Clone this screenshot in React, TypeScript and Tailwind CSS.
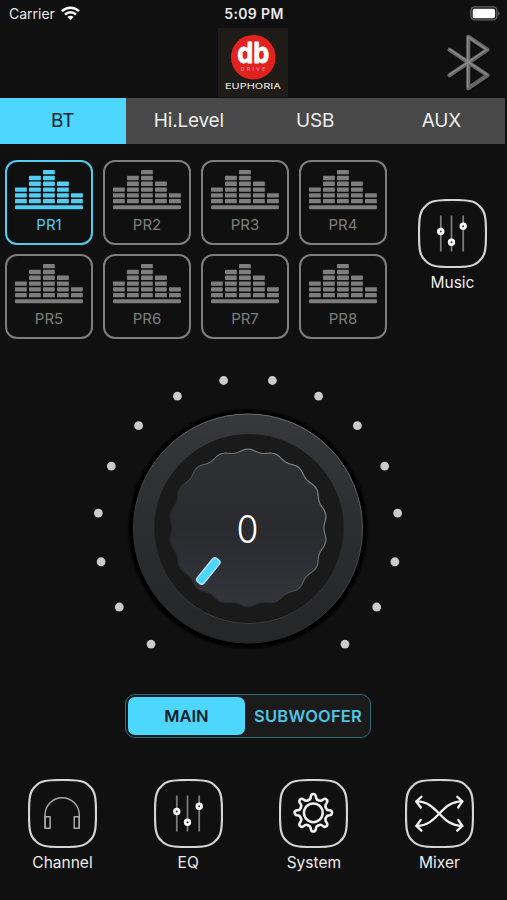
import { useState } from "react";
import type { ReactNode } from "react";
import clsx from "clsx";

const SOURCES = ["BT", "Hi.Level", "USB", "AUX"];
const PRESETS = ["PR1", "PR2", "PR3", "PR4", "PR5", "PR6", "PR7", "PR8"];
const BARS = [3, 5, 6, 4, 2];

const DOTS = Array.from({ length: 16 }, (_, i) => {
  const a = ((i - 7.5) * 18.65 * Math.PI) / 180;
  return { x: 150.5 * Math.sin(a), y: -150.5 * Math.cos(a) };
});

// wavy edge of the knob cap
const CAP_PATH =
  Array.from({ length: 360 }, (_, deg) => {
    const a = (deg * Math.PI) / 180;
    const r = 77.4 + 1.5 * Math.cos(18 * a);
    const x = (r * Math.sin(a)).toFixed(2);
    const y = (-r * Math.cos(a) - 1).toFixed(2);
    return `${deg === 0 ? "M" : "L"}${x} ${y}`;
  }).join("") + "Z";

function StatusBar() {
  return (
    <div className="grid h-7 grid-cols-3 items-center pb-px pl-[9px] pr-[6px] text-[#e8e8e8]">
      <div className="flex items-center gap-1.5">
        <span className="text-[14px]">Carrier</span>
        <svg width="19" height="15" viewBox="0 0 19 15" fill="none" stroke="white" strokeWidth="2.5">
          <path d="M1 5.2a12.2 12.2 0 0 1 17 0" />
          <path d="M4 8.5a7.9 7.9 0 0 1 11 0" />
          <path d="M6.4 11a4.4 4.4 0 0 1 6.2 0L9.5 14.3z" fill="white" stroke="none" />
        </svg>
      </div>
      <span className="-ml-[2px] text-center text-[14px] font-semibold tracking-[0.35px]">5:09 PM</span>
      <svg className="justify-self-end" width="31" height="15" viewBox="0 0 31 15">
        <rect x="0.9" y="0.9" width="26" height="13" rx="4" fill="none" stroke="#666" strokeWidth="1.3" />
        <rect x="2.7" y="2.7" width="22.4" height="9.6" rx="2" fill="white" />
        <path d="M28.3 5.2q2.4 2.3 0 4.6z" fill="#777" />
      </svg>
    </div>
  );
}

function Logo() {
  return (
    <svg className="bg-[#1f1c18]" width="70" height="69" viewBox="0 0 70 69">
      <circle cx="35.3" cy="29.2" r="22.3" fill="#e3211f" />
      <text
        x="19.3"
        y="34.6"
        fontSize="29"
        fontWeight="700"
        fill="white"
        stroke="white"
        strokeWidth="0.9"
        strokeLinejoin="round"
        textLength="32"
        lengthAdjust="spacingAndGlyphs"
      >
        db
      </text>
      <text x="22.8" y="42.6" fontSize="5" fill="#f3b0a8" textLength="24.5" lengthAdjust="spacing">
        DRIVE
      </text>
      <text x="7" y="60.5" fontSize="7.2" fontWeight="500" fill="#ddd" textLength="56" lengthAdjust="spacingAndGlyphs">
        EUPHORIA
      </text>
    </svg>
  );
}

function BluetoothIcon() {
  return (
    <svg width="46" height="60" viewBox="0 0 46 60" fill="none" strokeLinecap="round" strokeLinejoin="round">
      <path d="M3.5 18.500 41 44.500 22.500 57.500V5.500l18.500 13L3.500 44.500" stroke="#000" strokeWidth="5" opacity="0.5" />
      <path d="M2.500 17.800 40.500 43.300 21.300 56.300V4.800l19.200 13L2.500 43.300" stroke="#666" strokeWidth="4.200" />
      <path d="M2.500 17.200 40 42.700M20.700 55V4.800l19 12.700L2.500 42.700" stroke="#8a8a8a" strokeWidth="1.4" />
    </svg>
  );
}

function BarsIcon() {
  return (
    <svg width="68" height="40" viewBox="0 0 204 120" fill="currentColor">
      {BARS.map((count, col) =>
        Array.from({ length: count }, (_, row) => (
          <rect key={`${col}-${row}`} x={col * 42} y={87 - row * 17.4} width="35.5" height="13" rx="2" />
        )),
      )}
      <rect y="106" width="204" height="12" rx="4" />
    </svg>
  );
}

function Preset({ label, active, onClick }: { label: string; active: boolean; onClick: () => void }) {
  return (
    <button
      onClick={onClick}
      className={clsx(
        "flex h-[85px] w-[88px] flex-col items-center rounded-[12px] border-2 pt-[8px]",
        active ? "border-[#4fcdf3] text-[#4fcdf3]" : "border-[#7e7e7e] text-[#7e7e7e]",
      )}
    >
      <BarsIcon />
      <span className="mt-[5px] text-[15px] leading-5">{label}</span>
    </button>
  );
}

function IconButton({ label, children }: { label: string; children: ReactNode }) {
  return (
    <button className="flex w-[69px] flex-col items-center text-[#ececec]">
      <svg width="69" height="69" viewBox="0 0 206 206" fill="none" stroke="#f0f0f0" strokeLinecap="round" strokeLinejoin="round">
        <path
          d="M103 3C148 3 170 5 184 22C201 36 203 58 203 103S201 170 184 184C170 201 148 203 103 203S36 201 22 184C5 170 3 148 3 103S5 36 22 22C36 5 58 3 103 3Z"
          stroke="#d4d4d4"
          strokeWidth="6.5"
        />
        {children}
      </svg>
      <span className="mt-[4.5px] text-[15.5px] leading-5">{label}</span>
    </button>
  );
}

function SlidersGlyph() {
  return (
    <>
      <path d="M68 49V157M100 49V157M135 49V157" stroke="#808080" strokeWidth="5" strokeLinecap="butt" />
      <g fill="#333" stroke="white" strokeWidth="8">
        <circle cx="68" cy="97" r="7" />
        <circle cx="100" cy="129" r="7" />
        <circle cx="135" cy="81" r="7" />
      </g>
    </>
  );
}

function HeadphonesGlyph() {
  return (
    <g stroke="#a8a8a8" strokeWidth="4.5">
      <path d="M51 146V107a51 51 0 0 1 102 0V146" />
      <rect x="51" y="113" width="15" height="34" />
      <rect x="138" y="113" width="15" height="34" />
    </g>
  );
}

function GearGlyph() {
  return (
    <g transform="translate(102.5 101)" strokeWidth="7.5">
      {[0, 45, 90, 135, 180, 225, 270, 315].map((deg) => (
        <path key={deg} transform={`rotate(${deg})`} d="M-15.500-37.500Q-8-39-7.500-49Q-6-56 0-56Q6-56 7.500-49Q8-39 15.500-37.500" />
      ))}
      <circle r="28" />
    </g>
  );
}

function ShuffleGlyph() {
  return (
    <g strokeWidth="7">
      <path d="M35 67C100 67 104 140 171 140M35 140C100 140 104 67 171 67" />
      <path d="M49 53 34 67 47 85M49 154 34 140 47 122M156 53 171 67 159 85M156 154 171 140 159 122" />
    </g>
  );
}

function VolumeKnob({ value }: { value: number }) {
  return (
    <svg width="320" height="290" viewBox="-160 -160 320 290">
      <defs>
        <linearGradient id="ring" x1="0" y1="0" x2="0" y2="1">
          <stop offset="0" stopColor="#37383c" />
          <stop offset="0.5" stopColor="#2c2d30" />
          <stop offset="1" stopColor="#252628" />
        </linearGradient>
        <linearGradient id="rim" x1="0.7" y1="0" x2="0.3" y2="1">
          <stop offset="0" stopColor="#74757a" />
          <stop offset="0.6" stopColor="#38393c" />
          <stop offset="1" stopColor="#222" />
        </linearGradient>
        <linearGradient id="cap" x1="0" y1="0" x2="0" y2="1">
          <stop offset="0" stopColor="#2e3134" />
          <stop offset="0.5" stopColor="#2a2b2f" />
          <stop offset="1" stopColor="#34343c" />
        </linearGradient>
        <linearGradient id="capEdge" x1="1" y1="0.1" x2="0.2" y2="0.8">
          <stop offset="0" stopColor="#8a8b8d" />
          <stop offset="0.5" stopColor="#66686a" />
          <stop offset="0.8" stopColor="#26272a" />
        </linearGradient>
        <linearGradient id="well" x1="0" y1="0" x2="0" y2="1">
          <stop offset="0.4" stopColor="#1b1b1b" />
          <stop offset="1" stopColor="#3a3b3d" />
        </linearGradient>
        <filter id="soft" x="-10%" y="-10%" width="120%" height="120%">
          <feGaussianBlur stdDeviation="1.2" />
        </filter>
      </defs>
      {DOTS.map((dot, i) => (
        <circle key={i} cx={dot.x} cy={dot.y} r="4.4" fill="#cbcbcb" />
      ))}
      <circle r="119.5" fill="#000" filter="url(#soft)" />
      <circle r="114.5" cy="-0.5" fill="url(#ring)" stroke="url(#rim)" />
      <circle r="94.5" cx="1" fill="#1a1a1b" stroke="url(#well)" />
      <path d={CAP_PATH} fill="url(#cap)" stroke="url(#capEdge)" strokeWidth="1.2" />
      <g transform="translate(-39.7 42) rotate(39)">
        <rect x="-5" y="-15.8" width="10" height="31.6" rx="3.8" fill="#b9ecfb" />
        <rect x="-3.7" y="-14.5" width="7.4" height="29" rx="2.8" fill="#4dd4ff" />
      </g>
      <text x="-0.5" y="14" textAnchor="middle" fontSize="38" fontWeight="350" fill="white" textLength="22" lengthAdjust="spacingAndGlyphs">
        {value}
      </text>
    </svg>
  );
}

export default function App() {
  const [source, setSource] = useState("BT");
  const [preset, setPreset] = useState("PR1");

  return (
    <div className="flex h-[900px] w-[507px] flex-col overflow-hidden bg-[#101010] font-['Inter','Liberation_Sans',sans-serif]">
      <StatusBar />

      <header className="grid h-[70px] grid-cols-[1fr_auto_1fr] pr-[14px]">
        <div className="w-[218px]" />
        <Logo />
        <div className="flex justify-end pt-[4px]">
          <BluetoothIcon />
        </div>
      </header>

      <nav className="grid h-[46px] w-[505px] grid-cols-4 bg-[#484848]">
        {SOURCES.map((name) => (
          <button
            key={name}
            onClick={() => setSource(name)}
            className={clsx(
              "pr-px pt-px text-[19px] tracking-[-0.2px]",
              source === name ? "bg-[#4dd6ff] text-[#10242b]" : "text-[#ececec]",
            )}
          >
            {name}
          </button>
        ))}
      </nav>

      <section className="flex pl-[5px] pt-4">
        <div className="grid grid-cols-4 gap-x-[10px] gap-y-[9px]">
          {PRESETS.map((name) => (
            <Preset key={name} label={name} active={preset === name} onClick={() => setPreset(name)} />
          ))}
        </div>
        <div className="ml-[31px] mt-[39px]">
          <IconButton label="Music">
            <SlidersGlyph />
          </IconButton>
        </div>
      </section>

      <div className="mt-[30px] pl-[88px]">
        <VolumeKnob value={0} />
      </div>

      <div className="ml-[125px] mt-[35px] grid h-11 w-[246px] grid-cols-[117px_1fr] rounded-[10px] border border-[#2f6c7b] bg-[#1b1b1c] p-[2px] text-[16.5px] font-semibold">
        <button className="rounded-[7px] bg-[#4dd6ff] text-[#0c2029]">MAIN</button>
        <button className="pl-[3px] tracking-[0.2px] text-[#4fc3e6]">SUBWOOFER</button>
      </div>

      <footer className="mt-[41px] flex justify-between pl-[28px] pr-[33px]">
        <IconButton label="Channel">
          <HeadphonesGlyph />
        </IconButton>
        <IconButton label="EQ">
          <SlidersGlyph />
        </IconButton>
        <IconButton label="System">
          <GearGlyph />
        </IconButton>
        <IconButton label="Mixer">
          <ShuffleGlyph />
        </IconButton>
      </footer>
    </div>
  );
}
